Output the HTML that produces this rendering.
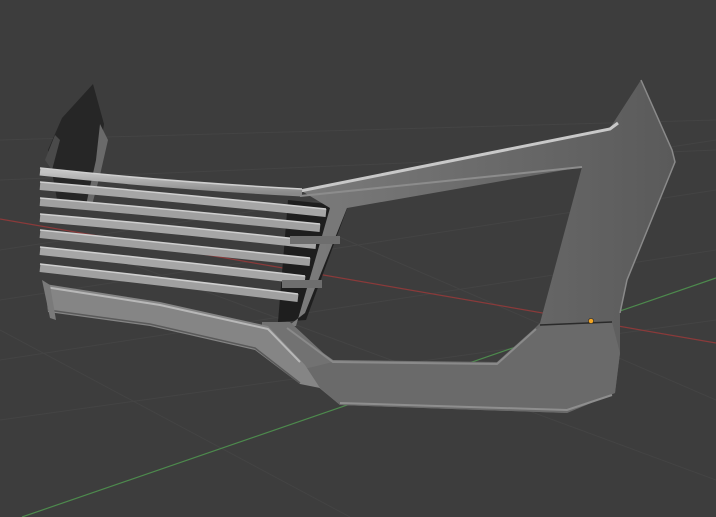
<!DOCTYPE html>
<html><head><meta charset="utf-8"><style>html,body{margin:0;padding:0;background:#3d3d3d;overflow:hidden}svg{display:block}</style></head>
<body>
<svg width="716" height="517" viewBox="0 0 716 517" xmlns="http://www.w3.org/2000/svg">
<defs>
<linearGradient id="pil" x1="0" y1="0" x2="1" y2="0">
<stop offset="0" stop-color="#7e7e7e"/><stop offset="0.5" stop-color="#6c6c6c"/><stop offset="1" stop-color="#5a5a5a"/>
</linearGradient>
<linearGradient id="slat" x1="0" y1="0" x2="0" y2="1">
<stop offset="0" stop-color="#c4c4c4"/><stop offset="1" stop-color="#8a8a8a"/>
</linearGradient>
</defs>
<rect width="716" height="517" fill="#3d3d3d"/>
<g stroke="#444" stroke-width="1" fill="none">
<path d="M0,250 L716,140"/><path d="M0,300 L716,190"/><path d="M0,360 L716,250"/>
<path d="M0,180 L716,150"/><path d="M0,140 L716,120"/><path d="M0,420 L716,320"/>
<path d="M0,330 L350,517"/><path d="M120,260 L716,480"/><path d="M300,220 L716,400"/>
</g>
<line x1="0" y1="219" x2="716" y2="343" stroke="#8a3a3a" stroke-width="1.2"/>
<line x1="22" y1="517" x2="716" y2="278" stroke="#4d8a4d" stroke-width="1.2"/>

<!-- left fin -->
<path d="M93,84 L104,124 L100,150 L88,205 L58,205 L48,150 L62,118 Z" fill="#262626"/>
<path d="M100,124 L108,140 L100,175 L92,205 L86,205 L96,160 Z" fill="#6a6a6a"/>
<path d="M45,160 L55,135 L60,140 L52,170 Z" fill="#4a4a4a"/>

<!-- dark cavity -->
<path d="M288,200 L348,206 L306,320 L278,322 Z" fill="#1e1e1e"/>

<!-- frame -->
<path fill-rule="evenodd" fill="url(#pil)" d="M300,190 L610,128 L641,80 L672,150 L675,162 L627,280 L620,313 L620,353 L615,393 L567,413 L340,405 L317,385 L265,345 L268,328 L296,326 L318,250 L330,208 Z
M347,208 L582,167 L540,323 L535,328 L497,362 L333,360 L287,327 L305,313 Z"/>
<path d="M262,322 L290,322 L333,362 L340,405 L317,386 L262,345 Z" fill="#727272"/>
<path d="M300,191 L610,129 L618,123" stroke="#c8c8c8" stroke-width="3" fill="none"/>
<path d="M300,196 L582,167" stroke="#8c8c8c" stroke-width="2" fill="none"/>
<path d="M541,326 L612,322 L620,353 L615,393 L567,413 L340,405 L317,385 L300,370 L333,362 L497,364 Z" fill="#6a6a6a"/>
<path d="M340,403 L567,410 L612,395" stroke="#8e8e8e" stroke-width="2" fill="none"/>
<path d="M287,328 L333,362 L497,364 L536,329" stroke="#8a8a8a" stroke-width="2" fill="none"/>
<path d="M540,325 L612,322" stroke="#2a2a2a" stroke-width="1.5"/>
<path d="M641,80 L672,150 L675,162 L627,280 L620,313" stroke="#8a8a8a" stroke-width="1.5" fill="none"/>

<!-- lower lip grille -->
<path d="M45,284 L160,302 L268,326 L305,365 L320,388 L300,384 L255,350 L150,326 L48,312 Z" fill="#858585"/>
<path d="M45,287 L160,305 L268,329 L300,362" stroke="#b8b8b8" stroke-width="2" fill="none"/>
<path d="M48,310 L150,324 L255,348 L300,383" stroke="#5a5a5a" stroke-width="1.5" fill="none"/>
<path d="M42,280 L50,318 L56,320 L50,285 Z" fill="#7a7a7a"/>

<!-- slats -->
<g fill="none" stroke-linecap="butt">
<path d="M40,172 Q170,186 302,193" stroke="url(#slat)" stroke-width="7"/>
<path d="M40,186 Q180,198 326,213" stroke="#a6a6a6" stroke-width="8"/>
<path d="M40,202 Q180,214 320,228" stroke="#a0a0a0" stroke-width="8"/>
<path d="M40,218 Q180,230 316,245" stroke="#a6a6a6" stroke-width="8"/>
<path d="M40,234 Q180,248 310,262" stroke="#a0a0a0" stroke-width="8"/>
<path d="M40,251 Q175,265 305,280" stroke="#a6a6a6" stroke-width="8"/>
<path d="M40,268 Q175,283 298,298" stroke="#a0a0a0" stroke-width="8"/>
</g>
<g fill="none" stroke="#cfcfcf" stroke-width="1.5">
<path d="M40,168 Q170,182 302,189"/>
<path d="M40,182 Q180,194 326,209"/>
<path d="M40,198 Q180,210 320,224"/>
<path d="M40,214 Q180,226 316,241"/>
<path d="M40,230 Q180,244 310,258"/>
<path d="M40,247 Q175,261 305,276"/>
<path d="M40,264 Q175,279 298,294"/>
</g>
<g fill="#6e6e6e">
<rect x="290" y="236" width="50" height="8"/>
<rect x="282" y="280" width="40" height="8"/>
</g>
<circle cx="591" cy="321" r="2.6" fill="#f5a623" stroke="#222" stroke-width="0.6"/>
</svg>
</body></html>
